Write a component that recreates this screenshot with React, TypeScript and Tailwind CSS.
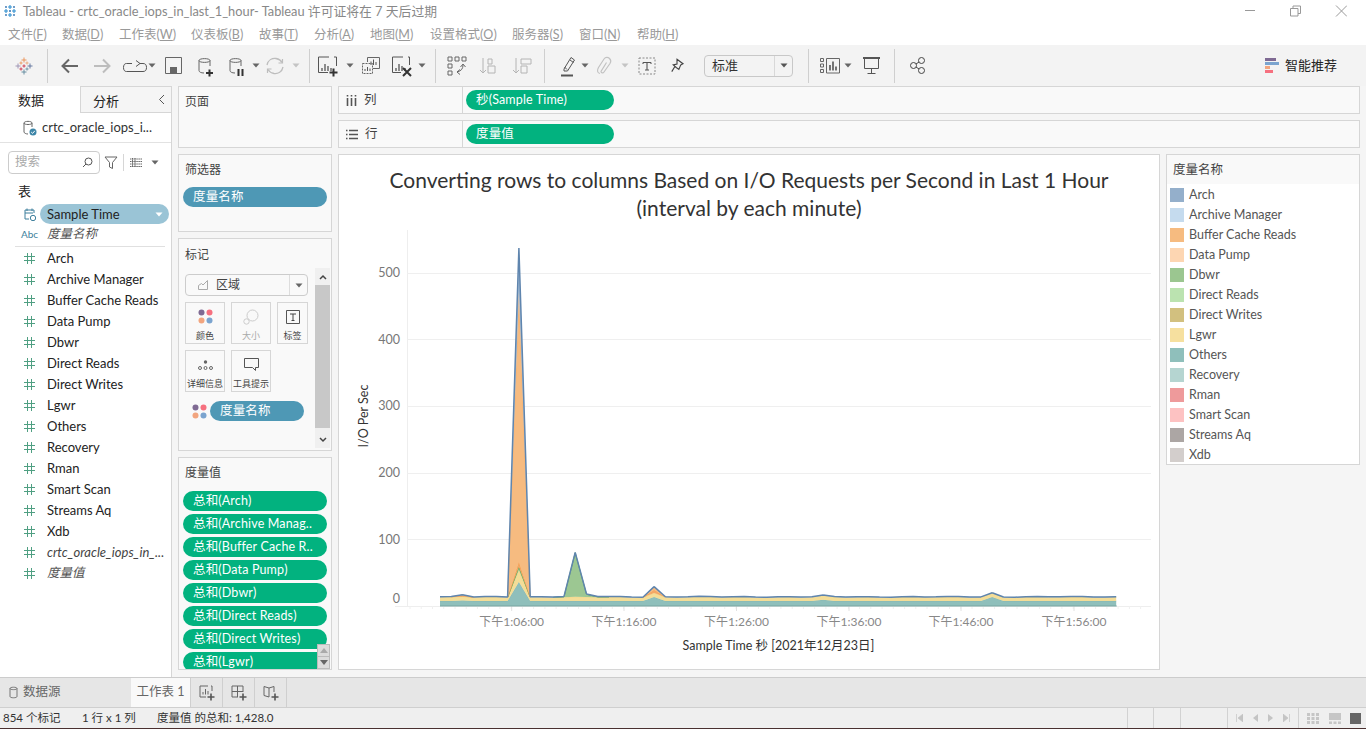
import React from "react";

const font = { fontFamily: '"Lato","Noto Sans CJK SC",sans-serif' };

const G = "#666";
function Ic({ w = 24, h = 24, children }: { w?: number; h?: number; children: React.ReactNode }) {
  return (
    <svg width={w} height={h} viewBox={`0 0 ${w} ${h}`} fill="none" stroke={G} strokeWidth="1" className="shrink-0">
      {children}
    </svg>
  );
}
function Plus({ x, y, s = 3, c = "#333", sw = 1.6 }: { x: number; y: number; s?: number; c?: string; sw?: number }) {
  return <path d={`M${x - s} ${y}H${x + s}M${x} ${y - s}V${y + s}`} stroke={c} strokeWidth={sw} />;
}
const Caret = ({ c = "#666" }: { c?: string }) => (
  <svg width="8" height="5" viewBox="0 0 8 5" className="shrink-0"><path d="M0.5 0.5H7.5L4 4.5Z" fill={c} /></svg>
);
const Logo = () => (
  <Ic w={18} h={18}>
    <Plus x={9} y={3} s={2.5} c="#eb8f50" sw={0.9} />
    <Plus x={9} y={15} s={2.5} c="#5b879b" sw={0.9} />
    <Plus x={3} y={9} s={2.5} c="#9a8fb0" sw={0.9} />
    <Plus x={15} y={9} s={2.5} c="#5b6f9b" sw={0.9} />
    <Plus x={6} y={6} s={1.6} c="#eb8f50" sw={0.8} />
    <Plus x={12} y={6} s={1.6} c="#e8a070" sw={0.8} />
    <Plus x={6} y={12} s={1.6} c="#c72035" sw={0.8} />
    <Plus x={12} y={12} s={1.6} c="#5b879b" sw={0.8} />
    <Plus x={9} y={9} s={1.6} c="#c72035" sw={0.8} />
  </Ic>
);
const Db = ({ x = 6, y = 4 }: { x?: number; y?: number }) => (
  <path d={`M${x} ${y + 2.5}C${x} ${y} ${x + 11} ${y} ${x + 11} ${y + 2.5}C${x + 11} ${y + 5} ${x} ${y + 5} ${x} ${y + 2.5}V${y + 12.5}C${x} ${y + 14} ${x + 2} ${y + 15} ${x + 5} ${y + 15}M${x + 11} ${y + 2.5}V${y + 8}`} stroke="#666" />
);
const Bars = ({ x, y }: { x: number; y: number }) => (
  <path d={`M${x} ${y + 9}V${y + 6}M${x + 3} ${y + 9}V${y + 2}M${x + 6} ${y + 9}V${y + 4}M${x + 9} ${y + 9}V${y + 6}`} stroke="#555" strokeWidth="1.3" />
);

const cells: [number, React.ReactNode, string?][] = [
  [47, <Logo />],
  [1, "sep"],
  [44, <Ic><path d="M20 12H5M11 5.5L4.5 12L11 18.5" stroke="#666" strokeWidth="2" /></Ic>],
  [20, <Ic><path d="M4 12H19M13 5.5L19.5 12L13 18.5" stroke="#bdbdbd" strokeWidth="2" /></Ic>],
  [36, <Ic w={24} h={20}><path d="M9 7.5H3.5C1.5 7.5 .5 9 .5 11.5S1.5 15.5 3.5 15.5H20C22.5 15.5 23.5 14 23.5 11.5S22.5 7.5 20 7.5H17M13 4.5L17 7.5L13 10.5" stroke="#555" strokeWidth="1" /></Ic>, "pl-[10px]"],
  [8, <Caret />],
  [34, <Ic w={17} h={17}><path d="M.5 .5H16.5V16.5H.5Z" stroke="#666" /><path d="M5 10H12V16H5Z" fill="#666" stroke="none" /></Ic>],
  [30, <Ic><Db x={6} y={4} /><Plus x={16.5} y={19} s={3.5} c="#333" sw={2} /></Ic>],
  [32, <Ic><Db x={6} y={4} /><path d="M14.5 15V22M18.5 15V22" stroke="#333" strokeWidth="2" /></Ic>],
  [8, <Caret />],
  [30, <Ic><path d="M4 11C5 6 9 4 13 4.5C16 5 18 6.5 19 8.5M20 13C19 18 15 20 11 19.5C8 19 6 17.5 5 15.5" stroke="#bdbdbd" strokeWidth="1.3" /><path d="M19.5 5V9H15.5M4.5 19V15H8.5" stroke="#bdbdbd" strokeWidth="1.2" /></Ic>],
  [12, <Caret c="#c4c4c4" />],
  [7, null],
  [1, "sep"],
  [36, <Ic w={24}><path d="M13 3H2.5V18.5H12M18 3H20.5V12" stroke="#555" /><Bars x={6} y={8} /><Plus x={17.5} y={18.5} s={4} sw={2} /></Ic>],
  [8, <Caret />],
  [34, <Ic w={18} h={17}><path d="M5.5 5V.5H17.5V11.5H11" stroke="#666" /><path d="M.5 6.5H10.5V16.5H.5Z" stroke="#666" fill="none" strokeDasharray="2 1" /><path d="M9 8V4.5M11.5 8V2.5M14 8V5" stroke="#555" /><path d="M3 14V12M5.5 14V10M8 14V11.5" stroke="#555" /></Ic>],
  [28, <Ic><path d="M13 3H2.5V18.5H11M18 3H19.5V11" stroke="#555" /><Bars x={6} y={8} /><path d="M13 14L21 22M21 14L13 22" stroke="#333" strokeWidth="2" /></Ic>],
  [12, <Caret />],
  [7, null],
  [1, "sep"],
  [42, <Ic><path d="M3 3H7V7H3ZM10 3H14V7H10ZM17 3H21V7H17ZM3 10H7V14H3ZM3 17H7V21H3Z" stroke="#666" /><path d="M18 11C18 15 16 17 12 18M15 15.5L12 18L15 20.5M15.5 13L18 10L20.5 13" stroke="#666" /></Ic>],
  [22, <Ic><path d="M6 4V19M3 16L6 19L9 16M11 5H15V10H11ZM11 12H18V19H11Z" stroke="#b4b4b4" /></Ic>],
  [44, <Ic><path d="M6 4V19M3 16L6 19L9 16M11 5H21V10H11ZM11 12H17V19H11Z" stroke="#b4b4b4" /></Ic>],
  [1, "sep"],
  [36, <Ic><path d="M8 15L15 3.5L18.5 6L11.5 17H8ZM14 6L17.5 8.5M8.5 13L11 15.5" stroke="#555" /><path d="M5 21.5H17" stroke="#555" strokeWidth="2" /></Ic>, "pl-[10px]"],
  [8, <Caret />],
  [30, <Ic><path d="M8 19.5C5 19 5 16 6.5 13.5L12 5C13.5 3 16 3 17.5 4.5C19 6 19 8 18 9.5L12 18C11 19.5 9 19 9 17.5L14.5 8.5" stroke="#c2c2c2" strokeWidth="1.2" /></Ic>],
  [12, <Caret c="#c4c4c4" />],
  [32, <Ic w={18} h={18}><path d="M1 1H17V17H1Z" stroke="#888" strokeDasharray="2 1.5" /><path d="M5 5.5H13M9 5.5V13M7 13H11M5 5.5V7M13 5.5V7" stroke="#555" strokeWidth="1.1" /></Ic>],
  [28, <svg width="18" height="18" viewBox="0 0 24 24" fill="none" className="shrink-0"><path d="M12 3L20 9L17 10.5L14.5 16.5L11 14L7 10.5L12 9.5ZM9 13L5 19.5" stroke="#444" strokeWidth="1.5" /></svg>],
  [13, null],
  [89, "select"],
  [15, null],
  [1, "sep"],
  [35, <Ic w={20} h={16}><path d="M.5 .5H3.5V3.5H.5ZM.5 6H3.5V9H.5ZM.5 11.5H3.5V14.5H.5Z" stroke="#666" /><path d="M6.5 .5H19.5V15H6.5Z" stroke="#666" /><path d="M10 12.5V7M13 12.5V3.5M16 12.5V8.5" stroke="#555" strokeWidth="1.6" /></Ic>, "pl-[7px]"],
  [8, <Caret />],
  [38, <Ic w={17} h={17}><path d="M0 1H17" stroke="#555" strokeWidth="2" /><path d="M1.5 1V11.5H15.5V1M8.5 11.5V16M4.5 16.5H12.5" stroke="#555" /></Ic>],
  [4, null],
  [1, "sep"],
  [44, <Ic w={15} h={17}><circle cx="3.5" cy="8.5" r="3" stroke="#444" /><circle cx="11.5" cy="3.5" r="3" stroke="#444" /><circle cx="11.5" cy="13.5" r="3" stroke="#444" /><path d="M6 7L9 5M6 10L9 12" stroke="#444" /></Ic>],
];

function Toolbar() {
  return (
    <div className="h-[41px] bg-[#f3f3f3] flex items-center shrink-0">
      {cells.map(([w, c, extra], i) =>
        c === "sep" ? (
          <div key={i} className="w-px h-[34px] bg-[#cfcfcf] shrink-0" />
        ) : c === "select" ? (
          <div key={i} className="h-[22px] w-[89px] shrink-0 border border-[#c8c8c8] rounded-sm flex items-center bg-[#f3f3f3] text-[13px] text-[#333]">
            <span className="flex-1 pl-[7px]">标准</span>
            <span className="w-[18px] h-full border-l border-[#d8d8d8] flex items-center justify-center"><Caret c="#555" /></span>
          </div>
        ) : (
          <div key={i} style={{ width: w }} className={`shrink-0 flex items-center justify-center overflow-visible ${extra ?? ""}`}>{c}</div>
        )
      )}
      <div className="flex-1" />
      <div className="flex items-center gap-[6px] mr-[29px]">
        <svg width="14" height="15" viewBox="0 0 14 15" className="shrink-0">
          <rect x="0" y="0" width="11" height="3" fill="#7f6a93" />
          <rect x="0" y="4" width="14" height="3" fill="#7ba4cf" />
          <rect x="0" y="8" width="5" height="3" fill="#f2a57f" />
          <rect x="0" y="12" width="8" height="3" fill="#f6707f" />
        </svg>
        <span className="text-[13px] text-[#222]">智能推荐</span>
      </div>
    </div>
  );
}

const menus: [string, string][] = [["文件", "F"], ["数据", "D"], ["工作表", "W"], ["仪表板", "B"], ["故事", "T"], ["分析", "A"], ["地图", "M"], ["设置格式", "O"], ["服务器", "S"], ["窗口", "N"], ["帮助", "H"]];
const menuW = [54, 57, 72, 68, 55, 56, 60, 82, 67, 58, 50];

const Pill = ({ children, color = "green", w = "w-full" }: { children: React.ReactNode; color?: "green" | "blue"; w?: string }) => (
  <div className={`h-[20px] ${w} rounded-[10px] ${color === "green" ? "bg-[#02b27f]" : "bg-[#4e98b5]"} text-white text-[12.5px] tracking-[0.15px] leading-[20px] pl-[10px] whitespace-nowrap overflow-hidden shrink-0`}>
    {children}
  </div>
);
const Panel = ({ className = "", children }: { className?: string; children?: React.ReactNode }) => (
  <div className={`bg-[#f9f9f9] border border-[#d6d6d6] ${className}`}>{children}</div>
);
const Hash = () => (
  <svg width="11" height="11" viewBox="0 0 11 11" className="shrink-0"><path d="M3.5 0V11M7.5 0V11M0 3.5H11M0 7.5H11" stroke="#4f9f82" strokeWidth="1" /></svg>
);

const fields = ["Arch", "Archive Manager", "Buffer Cache Reads", "Data Pump", "Dbwr", "Direct Reads", "Direct Writes", "Lgwr", "Others", "Recovery", "Rman", "Smart Scan", "Streams Aq", "Xdb"];
const legend: [string, string][] = [
  ["Arch", "#94afcb"], ["Archive Manager", "#c5dbee"], ["Buffer Cache Reads", "#f6bb80"], ["Data Pump", "#fdd6b2"], ["Dbwr", "#9bc690"], ["Direct Reads", "#bbe3b0"], ["Direct Writes", "#d2c07f"], ["Lgwr", "#f6e09f"], ["Others", "#8fbfbb"], ["Recovery", "#b5d5d1"], ["Rman", "#ee9a9b"], ["Smart Scan", "#fdc2c2"], ["Streams Aq", "#aca6a4"], ["Xdb", "#d3cecc"],
];
const dots = (
  <svg width="15" height="15" viewBox="0 0 15 15" className="shrink-0">
    <circle cx="3.5" cy="3.5" r="3" fill="#7f6a93" /><circle cx="11.5" cy="3.5" r="3" fill="#f6707f" /><circle cx="3.5" cy="11.5" r="3" fill="#f2a57f" /><circle cx="11.5" cy="11.5" r="3" fill="#7ba4cf" />
  </svg>
);

function Sidebar() {
  return (
    <div className="w-[172px] shrink-0 bg-white border-r border-[#d6d6d6] flex flex-col overflow-hidden">
      <div className="h-[27px] flex shrink-0 text-[13px] text-[#222]">
        <div className="w-[81px] pl-[18px] leading-[28px] border-r border-[#d6d6d6]">数据</div>
        <div className="flex-1 bg-[#f5f5f5] border-b border-[#d6d6d6] pl-[12px] leading-[28px] flex border-t border-t-[#d6d6d6]">
          <span className="flex-1">分析</span>
          <span className="mr-[6px] flex items-center">
            <svg width="7" height="11" viewBox="0 0 7 11"><path d="M6 1L1.5 5.5L6 10" stroke="#555" fill="none" /></svg>
          </span>
        </div>
      </div>
      <div className="h-[30px] shrink-0 border-b border-[#e2e2e2] flex items-center pl-[23px] gap-[5px] text-[13px] text-[#333]">
        <svg width="14" height="16" viewBox="0 0 14 16" className="shrink-0">
          <path d="M1 3C1 0.8 9 0.8 9 3C9 5 1 5 1 3V12C1 13 3 14 5 14M9 3V7" stroke="#666" fill="none" />
          <circle cx="10" cy="12" r="3.5" fill="#3d86a8" />
          <path d="M8.2 12L9.6 13.4L11.8 10.8" stroke="#fff" fill="none" />
        </svg>
        <span>crtc_oracle_iops_i...</span>
      </div>
      <div className="flex items-center h-[22px] mt-[8px] shrink-0 pl-[8px]">
        <div className="w-[92px] h-[23px] border border-[#ccc] rounded-sm flex items-center pl-[6px] pr-[6px] text-[12.5px] text-[#aaa]">
          <span className="flex-1">搜索</span>
          <svg width="11" height="11" viewBox="0 0 11 11"><circle cx="6.5" cy="4.5" r="3.5" stroke="#555" fill="none" /><path d="M4 7L1 10" stroke="#555" /></svg>
        </div>
        <svg width="14" height="13" viewBox="0 0 14 13" className="ml-[4px]"><path d="M1 1H13L8.5 6.5V12.5L5.5 11V6.5Z" stroke="#666" fill="none" /></svg>
        <div className="w-px h-[17px] bg-[#d6d6d6] ml-[5px]" />
        <svg width="13" height="9" viewBox="0 0 13 9" className="ml-[6px]"><path d="M0 1H12M0 3.5H12M0 6H12M0 8.5H12M2.5 0V9M5 0V9" stroke="#666" strokeWidth="1" strokeDasharray="1.5 .6" fill="none" /></svg>
        <span className="ml-[8px]"><Caret /></span>
      </div>
      <div className="pl-[18px] text-[13px] text-[#222] mt-[9px] leading-[18px] shrink-0">表</div>
      <div className="flex items-center mt-[4px] h-[20px] shrink-0 pl-[24px] gap-[4px]">
        <svg width="12" height="13" viewBox="0 0 12 13" className="shrink-0"><path d="M1 2H10V5M1 2V11H5M1 5H9M3 0.5V3M8 0.5V3" stroke="#3d7f9c" fill="none" /><circle cx="9" cy="10" r="2.7" stroke="#3d7f9c" fill="none" /></svg>
        <div className="w-[129px] h-[20px] rounded-[10px] bg-[#9ac4d6] text-[13px] leading-[20px] pl-[7px] text-[#222] flex items-center">
          <span className="flex-1">Sample Time</span>
          <span className="mr-[6px]"><Caret c="#fff" /></span>
        </div>
      </div>
      <div className="flex items-center h-[21px] shrink-0 pl-[21px] text-[12.5px] italic text-[#555]">
        <span className="text-[10px] not-italic text-[#3d7f9c] w-[26px]">Abc</span>
        <span>度量名称</span>
      </div>
      <div className="ml-[15px] mr-[6px] border-b border-[#e0e0e0] mt-[1px] shrink-0" />
      <div className="flex flex-col pt-[1px]">
        {fields.map((f) => (
          <div key={f} className="h-[21px] flex items-center pl-[24px] gap-[12px] text-[13px] text-[#222]"><Hash /><span>{f}</span></div>
        ))}
        <div className="h-[21px] flex items-center pl-[24px] gap-[12px] text-[13px] italic text-[#444]"><Hash /><span>crtc_oracle_iops_in_...</span></div>
        <div className="h-[21px] flex items-center pl-[24px] gap-[12px] text-[12.5px] italic text-[#555]"><Hash /><span>度量值</span></div>
      </div>
    </div>
  );
}

const Card = ({ w, label, gray, children }: { w: string; label: string; gray?: boolean; children: React.ReactNode }) => (
  <div className={`${w} h-[42px] border border-[#d6d6d6] flex flex-col items-center shrink-0`}>
    <div className="h-[27px] flex items-center justify-center">{children}</div>
    <div className={`text-[9px] leading-[12px] whitespace-nowrap ${gray ? "text-[#aaa]" : "text-[#444]"}`}>{label}</div>
  </div>
);

function Middle() {
  const pills = ["总和(Arch)", "总和(Archive Manag..", "总和(Buffer Cache R..", "总和(Data Pump)", "总和(Dbwr)", "总和(Direct Reads)", "总和(Direct Writes)", "总和(Lgwr)"];
  return (
    <div className="w-[154px] shrink-0 ml-[6px] flex flex-col gap-[6px] pb-[7px] text-[12px] text-[#444]">
      <Panel className="h-[62px] pl-[6px] pt-[6px]">页面</Panel>
      <Panel className="h-[78px] px-[4px] pt-[6px]">
        <div className="pl-[2px] leading-[17px] mb-[9px]">筛选器</div>
        <Pill color="blue">度量名称</Pill>
      </Panel>
      <Panel className="h-[213px] relative pt-[7px] overflow-hidden">
        <div className="pl-[6px] leading-[17px]">标记</div>
        <div className="ml-[6px] mt-[11px] w-[123px] h-[22px] border border-[#ccc] rounded-sm flex items-center">
          <span className="w-[22px] flex justify-end">
            <svg width="10" height="10" viewBox="0 0 10 10"><path d="M.5 9.5V5.5L3.5 3.5L5 5L9.5 .5V9.5Z" stroke="#aaa" fill="none" /></svg>
          </span>
          <span className="flex-1 pl-[8px] text-[#444]">区域</span>
          <span className="w-[18px] h-full border-l border-[#ddd] flex items-center justify-center"><Caret /></span>
        </div>
        <div className="ml-[6px] mt-[6px] flex gap-[6px]">
          <Card w="w-[40px]" label="颜色">{dots}</Card>
          <Card w="w-[40px]" label="大小" gray>
            <svg width="16" height="16" viewBox="0 0 16 16"><circle cx="9.5" cy="6.5" r="5.5" stroke="#ccc" fill="none" /><circle cx="3.5" cy="12.5" r="2.7" stroke="#ccc" fill="none" /></svg>
          </Card>
          <Card w="w-[31px]" label="标签">
            <svg width="14" height="14" viewBox="0 0 14 14"><path d="M.5 .5H13.5V13.5H.5Z" stroke="#555" fill="none" /><path d="M4 4H10M7 4V10.5M5.5 10.5H8.5" stroke="#444" /></svg>
          </Card>
        </div>
        <div className="ml-[6px] mt-[6px] flex gap-[6px]">
          <Card w="w-[40px]" label="详细信息">
            <svg width="15" height="10" viewBox="0 0 15 10"><circle cx="7.5" cy="2" r="1.7" fill="#666" /><circle cx="2" cy="8" r="1.5" stroke="#666" fill="none" /><circle cx="7.5" cy="8" r="1.5" stroke="#666" fill="none" /><circle cx="13" cy="8" r="1.5" stroke="#666" fill="none" /></svg>
          </Card>
          <Card w="w-[40px]" label="工具提示">
            <svg width="15" height="13" viewBox="0 0 15 13"><path d="M.5 .5H14.5V9.5H11.5V12.5L8.5 9.5H.5Z" stroke="#555" fill="none" /></svg>
          </Card>
        </div>
        <div className="ml-[13px] mt-[9px] flex items-center gap-[3px]">
          {dots}
          <Pill color="blue" w="w-[94px]">度量名称</Pill>
        </div>
        <div className="absolute right-[1px] top-[29px] bottom-[2px] w-[15px] bg-[#f0f0f0] flex flex-col">
          <div className="h-[17px] flex items-center justify-center">
            <svg width="8" height="6" viewBox="0 0 8 6"><path d="M1 5L4 2L7 5" stroke="#444" strokeWidth="1.5" fill="none" /></svg>
          </div>
          <div className="h-[143px] bg-[#c8c8c8]" />
          <div className="flex-1" />
          <div className="h-[17px] flex items-center justify-center">
            <svg width="8" height="6" viewBox="0 0 8 6"><path d="M1 1L4 4L7 1" stroke="#444" strokeWidth="1.5" fill="none" /></svg>
          </div>
        </div>
      </Panel>
      <Panel className="h-[213px] relative overflow-hidden pt-[6px] px-[4px]">
        <div className="pl-[2px] leading-[17px] mb-[10px]">度量值</div>
        <div className="flex flex-col gap-[3px]">
          {pills.map((p) => <Pill key={p}>{p}</Pill>)}
        </div>
        <div className="absolute right-[1px] bottom-0 w-[13px] h-[25px] flex flex-col bg-[#dcdcdc] border border-[#bbb]">
          <div className="flex-1 flex items-center justify-center"><svg width="8" height="5" viewBox="0 0 8 5"><path d="M4 0L8 5H0Z" fill="#aaa" /></svg></div>
          <div className="flex-1 flex items-center justify-center border-t border-[#bbb]"><svg width="8" height="5" viewBox="0 0 8 5"><path d="M4 5L8 0H0Z" fill="#666" /></svg></div>
        </div>
      </Panel>
    </div>
  );
}

/* ---- chart ---- */
const N = 61;
const px = (i: number) => 440 + i * 11.27;
const noise = (i: number) => 0.35 * Math.sin(i * 1.7) + 0.25 * Math.sin(i * 0.6);
function layer(base: number, o: Record<number, number>, n = 0) {
  return Array.from({ length: N }, (_, i) => (o[i] !== undefined ? o[i] : base + n * noise(i)));
}
const layers: { h: number[]; fill: string; line: string; sw: number }[] = [
  { h: layer(5, { 7: 24, 19: 9, 49: 9, 34: 6.2, 2: 5.5 }), fill: "#8fbfbb", line: "#7fb3af", sw: 0.6 },
  { h: layer(3.8, { 7: 12, 19: 4 }, 0.8), fill: "#f4dd97", line: "#efd47e", sw: 0.6 },
  { h: layer(0, { 7: 3, 12: 44, 13: 2.7, 11: 0.4, 14: 0.3 }), fill: "#9cc792", line: "#62a556", sw: 1 },
  { h: layer(0, { 7: 5, 2: 0.5, 19: 3 }), fill: "#f4a866", line: "#f29b47", sw: 0.8 },
  { h: layer(0, { 7: 270, 2: 1, 19: 3 }), fill: "#f6bb80", line: "#f3a860", sw: 0.6 },
  { h: layer(0.4, { 7: 44 }), fill: "#a7bfd8", line: "#5f85ae", sw: 1.5 },
];
function Areas() {
  const cum = new Array(N).fill(0);
  return (
    <>
      {layers.map((l, k) => {
        const bottom = cum.slice();
        l.h.forEach((v, i) => (cum[i] += v));
        const top = cum.slice();
        const t = top.map((v, i) => `${px(i).toFixed(1)},${(606 - v).toFixed(1)}`);
        const b = bottom.map((v, i) => `${px(i).toFixed(1)},${(606 - v).toFixed(1)}`).reverse();
        const segs = t.slice(0, -1).map((p, i) => (l.h[i] > 0 || l.h[i + 1] > 0 ? `M${p}L${t[i + 1]}` : "")).join("");
        return (
          <g key={k}>
            <polygon points={[...t, ...b].join(" ")} fill={l.fill} />
            <path d={segs} fill="none" stroke={l.line} strokeWidth={l.sw} strokeLinejoin="round" />
          </g>
        );
      })}
    </>
  );
}

function Chart() {
  const ox = 338, oy = 154;
  const ys = [500, 400, 300, 200, 100];
  const xt: [number, string][] = [[511.7, "下午1:06:00"], [624, "下午1:16:00"], [736.5, "下午1:26:00"], [849, "下午1:36:00"], [961, "下午1:46:00"], [1074, "下午1:56:00"]];
  return (
    <div className="flex-1 h-[516px] bg-white border border-[#d6d6d6] relative overflow-hidden">
      <div className="text-center text-[21px] leading-[28px] text-[#333] pt-[11px]">
        <div>Converting rows to columns Based on I/O Requests per Second in Last 1 Hour</div>
        <div>(interval by each minute)</div>
      </div>
      <svg className="absolute left-[-1px] top-[-1px]" width="822" height="516" viewBox={`${ox} ${oy} 822 516`}>
        <path d={`M407.5 230V606`} stroke="#eeeeee" />
        {ys.map((v) => {
          const y = Math.round(606 - v * 0.667) + 0.5;
          return <path key={v} d={`M407 ${y}H1151`} stroke="#efefef" />;
        })}
        <path d="M395 606.5H1151" stroke="#eeeeee" />
        {Array.from({ length: 66 }, (_, i) => 410 + i * 11.24).map((x, i) => (
          <path key={i} d={`M${x.toFixed(1)} 606V609`} stroke="#f0f0f0" />
        ))}
        {xt.map(([x]) => <path key={x} d={`M${x} 606V611`} stroke="#e2e2e2" />)}
        <Areas />
        <path d="M440 606H1116.7" stroke="#78a5a1" strokeWidth="1.2" />
        {ys.map((v) => (
          <text key={v} x="400" y={606 - v * 0.667 + 4.5} textAnchor="end" fontSize="12.5" fill="#777" style={font}>{v}</text>
        ))}
        <text x="400" y="602.5" textAnchor="end" fontSize="12.5" fill="#777" style={font}>0</text>
        {xt.map(([x, s]) => (
          <text key={x} x={x} y="625.5" textAnchor="middle" fontSize="12" fill="#888" style={font}>{s}</text>
        ))}
        <text x="778.5" y="650" textAnchor="middle" fontSize="12.5" fill="#333" style={font}>Sample Time 秒 [2021年12月23日]</text>
        <text x="0" y="0" transform="translate(368 416) rotate(-90)" textAnchor="middle" fontSize="12.5" fill="#333" style={font}>I/O Per Sec</text>
      </svg>
    </div>
  );
}

function Shelf({ h, icon, label, pill, mb = "" }: { h: string; icon: React.ReactNode; label: string; pill: string; mb?: string }) {
  return (
    <Panel className={`${h} flex items-center shrink-0 ${mb}`}>
      <div className="w-[124px] h-full border-r border-[#d6d6d6] flex items-center pl-[7px] gap-[7px] text-[12.5px] text-[#444] shrink-0">
        {icon}<span>{label}</span>
      </div>
      <div className="pl-[3px]"><Pill w="w-[148px]">{pill}</Pill></div>
    </Panel>
  );
}

function Right() {
  return (
    <div className="flex-1 ml-[6px] mr-[6px] flex flex-col min-w-0">
      <Shelf h="h-[28px]" mb="mb-[6px]" label="列" pill="秒(Sample Time)"
        icon={<svg width="11" height="13" viewBox="0 0 11 13"><path d="M1.5 4V12M5.5 4V12M9.5 4V12" stroke="#555" strokeWidth="1.6" /><path d="M1.5 1V2.5M5.5 1V2.5M9.5 1V2.5" stroke="#555" strokeWidth="1.6" /></svg>} />
      <Shelf h="h-[28px]" mb="mb-[6px]" label="行" pill="度量值"
        icon={<svg width="12" height="11" viewBox="0 0 12 11"><path d="M3 1.5H12M3 5.5H12M3 9.5H12M0 1.5H1.5M0 5.5H1.5M0 9.5H1.5" stroke="#555" strokeWidth="1.6" /></svg>} />
      <div className="flex gap-[6px] flex-1 min-h-0">
        <Chart />
        <div className="w-[194px] h-[311px] border border-[#d6d6d6] bg-white shrink-0">
          <div className="h-[29px] bg-[#f9f9f9] pl-[6px] text-[12.5px] leading-[30px] text-[#444]">度量名称</div>
          <div className="flex flex-col pl-[3px] pt-[1px]">
            {legend.map(([n, c]) => (
              <div key={n} className="h-[20px] flex items-center gap-[5px] text-[12.5px] text-[#555]">
                <span style={{ background: c }} className="w-[14px] h-[14px] shrink-0" />
                <span>{n}</span>
              </div>
            ))}
          </div>
        </div>
      </div>
    </div>
  );
}

function Tabs() {
  const T = ({ children }: { children: React.ReactNode }) => (
    <div className="w-[32px] h-full border-r border-[#cfcfcf] flex items-center justify-center shrink-0">{children}</div>
  );
  return (
    <div className="h-[30px] shrink-0 bg-[#e6e6e6] border-t border-[#cccccc] flex items-center text-[12.5px]">
      <div className="w-[131px] h-full flex items-center pl-[9px] gap-[5px] text-[#666] shrink-0">
        <svg width="9" height="13" viewBox="0 0 9 13"><path d="M1 2.5C1 .8 8 .8 8 2.5V10.5C8 12.2 1 12.2 1 10.5Z" stroke="#777" fill="none" /><path d="M1 2.5C1 4 8 4 8 2.5" stroke="#777" fill="none" /></svg>
        <span>数据源</span>
      </div>
      <div className="w-[60px] h-full bg-[#f9f9f9] border-r border-[#cfcfcf] flex items-center justify-center text-[#666] shrink-0">工作表 1</div>
      <T><svg width="16" height="16" viewBox="0 0 16 16"><path d="M9 1H1V12H7M12 1H13V6" stroke="#666" fill="none" /><path d="M4 9.5V7M6.5 9.5V4M9 9.5V6" stroke="#666" /><Plus x={12} y={12} s={3.5} c="#555" sw={1.6} /></svg></T>
      <T><svg width="16" height="16" viewBox="0 0 16 16"><path d="M1 1H12V7M1 1V12H7M1 6.5H12M6.5 1V12" stroke="#666" fill="none" /><Plus x={12} y={12} s={3.5} c="#555" sw={1.6} /></svg></T>
      <T><svg width="16" height="16" viewBox="0 0 16 16"><path d="M1 1.5L6 3L11 1.5V7M1 1.5V10.5L6 12M6 3V12" stroke="#666" fill="none" /><Plus x={12} y={12} s={3.5} c="#555" sw={1.6} /></svg></T>
    </div>
  );
}

function Status() {
  const tri = "#c4c4c4";
  return (
    <div className="h-[22px] shrink-0 bg-[#efefef] border-t border-[#cfcfcf] border-b border-b-[#4a3030] flex items-center text-[11.5px] text-[#333]">
      <span className="w-[82px] pl-[3px] shrink-0">854 个标记</span>
      <span className="w-[75px] shrink-0">1 行 x 1 列</span>
      <span className="flex-1">度量值 的总和: 1,428.0</span>
      {[26, 27, 47].map((w, i) => <div key={i} style={{ width: w }} className="h-full border-l border-[#d2d2d2] shrink-0" />)}
      <div className="w-[71px] h-full border-l border-[#d2d2d2] shrink-0 flex items-center justify-around px-[3px]">
        <svg width="7" height="8" viewBox="0 0 7 8"><path d="M0.5 0V8M7 0V8L2 4Z" stroke={tri} fill={tri} strokeWidth=".7" /></svg>
        <svg width="5" height="8" viewBox="0 0 5 8"><path d="M5 0V8L0 4Z" fill={tri} /></svg>
        <svg width="5" height="8" viewBox="0 0 5 8"><path d="M0 0V8L5 4Z" fill={tri} /></svg>
        <svg width="7" height="8" viewBox="0 0 7 8"><path d="M6.5 0V8M0 0V8L5 4Z" stroke={tri} fill={tri} strokeWidth=".7" /></svg>
      </div>
      <div className="w-[68px] shrink-0 h-full border-l border-[#d2d2d2] flex items-center pl-[8px] gap-[10px]">
        <svg width="12" height="11" viewBox="0 0 12 11"><path d="M0 0H3V3H0ZM4.5 0H7.5V3H4.5ZM9 0H12V3H9ZM0 4H3V7H0ZM4.5 4H7.5V7H4.5ZM9 4H12V7H9ZM0 8H3V11H0ZM4.5 8H7.5V11H4.5ZM9 8H12V11H9Z" fill="#c6c6c6" /></svg>
        <svg width="12" height="11" viewBox="0 0 12 11"><path d="M0 0H12V7H0ZM0 8.5H3V11H0ZM4.5 8.5H7.5V11H4.5ZM9 8.5H12V11H9Z" fill="#c6c6c6" /></svg>
        <div className="w-[11px] h-[11px] bg-[#666] ml-[-1px]" />
      </div>
    </div>
  );
}

export default function App() {
  return (
    <div style={font} className="w-[1366px] h-[729px] overflow-hidden flex flex-col bg-[#f5f5f5]">
      <div className="h-[22px] bg-white flex items-center shrink-0">
        <svg width="14" height="14" viewBox="0 0 14 14" className="ml-[3px] shrink-0">
          <g stroke="#2f8fd0" strokeWidth="1.1" fill="none"><path d="M7 1V5M5 3H9M7 9V13M5 11H9M1 7H5M3 5V9M9 7H13M11 5V9" /></g>
          <g fill="#2f6fb0"><circle cx="7" cy="7" r="1" /><circle cx="3" cy="3" r=".9" /><circle cx="11" cy="3" r=".9" /><circle cx="3" cy="11" r=".9" /><circle cx="11" cy="11" r=".9" /></g>
        </svg>
        <span className="ml-[6px] text-[12.8px] leading-[22px] text-[#888] flex-1 whitespace-nowrap">Tableau - crtc_oracle_iops_in_last_1_hour- Tableau 许可证将在 7 天后过期</span>
        <svg width="102" height="12" viewBox="0 0 102 12" className="mr-[19px] shrink-0" stroke="#999" fill="none">
          <path d="M0 5.5H10" />
          <path d="M45.5 3.5H53V11H45.5ZM48 3.5V1H55.5V8.5H53" />
          <path d="M91 .5L102 11.5M102 .5L91 11.5" />
        </svg>
      </div>
      <div className="h-[23px] bg-white flex items-center pl-[8px] pt-[3px] text-[12.5px] text-[#999] shrink-0">
        {menus.map(([m, k], i) => (
          <span key={m} style={{ width: menuW[i] }} className="shrink-0 whitespace-nowrap">{m}(<u>{k}</u>)</span>
        ))}
      </div>
      <Toolbar />
      <div className="flex-1 min-h-0 flex">
        <Sidebar />
        <Middle />
        <Right />
      </div>
      <Tabs />
      <Status />
    </div>
  );
}
